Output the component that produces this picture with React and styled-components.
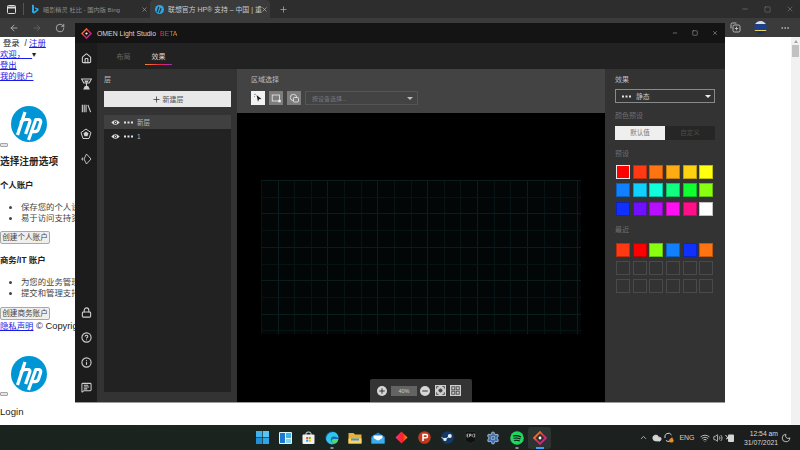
import styled, { createGlobalStyle } from "styled-components";
import {
  Home, Lock, CircleHelp, Info, MessageSquareText, Plus, ArrowLeft, ArrowRight, RotateCw,
  X, Minus, Square, Ellipsis, ChevronUp, Wifi, Volume2, Moon, Cloud, Settings
} from "lucide-react";

const CJK = `"Liberation Sans", "Noto Sans CJK SC", sans-serif`;

const Global = createGlobalStyle`
  html, body { margin: 0; padding: 0; width: 800px; height: 450px; overflow: hidden; background: #fff; }
  * { box-sizing: border-box; }
  body { font-family: ${CJK}; }
`;

const Screen = styled.div`
  position: relative;
  width: 800px;
  height: 450px;
  display: flex;
  flex-direction: column;
  overflow: hidden;
`;

/* ---- browser chrome ---- */
const TabStrip = styled.div`
  height: 18px;
  background: #2d2d2d;
  display: flex;
  align-items: stretch;
  color: #c9c9c9;
`;
const StripIcon = styled.div`
  width: 24px;
  display: flex;
  align-items: center;
  justify-content: center;
  border-right: 1px solid #555;
  margin: 3px 0;
`;
const Tab = styled.div`
  width: ${(p) => p.$w}px;
  display: flex;
  align-items: center;
  gap: 4px;
  padding: 0 2px 0 5px;
  background: ${(p) => (p.$active ? "#3b3b3b" : "transparent")};
  border-radius: 4px 4px 0 0;
  white-space: nowrap;
  svg { flex-shrink: 0; }
`;
const TabTitle = styled.span`
  flex: 1;
  min-width: 0;
  font-size: ${(p) => (p.$active ? 6.9 : 6.2)}px;
  color: ${(p) => (p.$active ? "#c8c8c8" : "#8c8c8c")};
`;
const NewTab = styled.div`
  width: 26px;
  display: flex;
  align-items: center;
  justify-content: center;
  color: #aaa;
`;
const WinControls = styled.div`
  margin-left: auto;
  display: flex;
  align-items: center;
  gap: 15px;
  padding-right: 6px;
  color: #777;
`;
const AddressBar = styled.div`
  height: 19px;
  background: #3b3b3b;
  display: flex;
  align-items: center;
  justify-content: space-between;
  padding: 0 10px 0 9px;
  color: #bbb;
`;
const NavGroup = styled.div`
  display: flex;
  align-items: center;
  gap: 13px;
`;
const Avatar = styled.div`
  width: 13px;
  height: 13px;
  border-radius: 50%;
  background: linear-gradient(180deg, #cfe0f5 0 25%, #1f3f86 25% 70%, #e8d25a 70% 78%, #16306b 78%);
`;

/* ---- the page behind the app ---- */
const Body = styled.div`
  flex: 1;
  display: flex;
  background: #fff;
  min-height: 0;
`;
const Page = styled.div`
  flex: 1;
  font-size: 8.4px;
  color: #222;
  min-width: 0;
  overflow: hidden;
`;
const Link = styled.a`
  color: #1a1ae6;
  text-decoration: underline;
`;
const TopLine = styled.div`
  height: ${(p) => p.$h || 11}px;
  line-height: ${(p) => p.$h || 11}px;
  padding-left: ${(p) => p.$pad || 0}px;
  white-space: nowrap;
`;
const LogoWrap = styled.div`
  padding: ${(p) => p.$top}px 0 0 11px;
  height: ${(p) => p.$h}px;
`;
const MiniButton = styled.div`
  width: 8px;
  height: 4px;
  background: #e4e4e4;
  border: 1px solid #a5a5a5;
  border-radius: 1px;
`;
const PageTitle = styled.div`
  font-size: 9.7px;
  font-weight: 700;
  margin-top: 9px;
  height: 12px;
  line-height: 12px;
  white-space: nowrap;
`;
const SubTitle = styled.div`
  font-size: 8.4px;
  font-weight: 700;
  margin-top: ${(p) => p.$top}px;
  height: 11px;
  line-height: 11px;
  white-space: nowrap;
`;
const Bullets = styled.ul`
  margin: 11px 0 0;
  padding: 0 0 0 21px;
  list-style: disc;
  li {
    height: 10.5px;
    line-height: 10.5px;
    white-space: nowrap;
    color: #444;
  }
`;
const PageButton = styled.div`
  width: 50px;
  height: 13px;
  margin-top: ${(p) => p.$top || 8}px;
  font-size: 7.6px;
  line-height: 11px;
  text-align: center;
  background: #efefef;
  border: 1px solid #a8a8a8;
  border-radius: 2px;
  color: #444;
`;
const FooterLine = styled.div`
  font-size: 9.3px;
  line-height: 11px;
  height: 11px;
  margin-top: 1px;
  white-space: nowrap;
  a { font-size: 8.4px; }
`;
const LoginText = styled.div`
  font-size: 9.6px;
  margin-top: 10px;
`;
const ScrollTrack = styled.div`
  width: 9px;
  background: #f1f1f1;
  display: flex;
  flex-direction: column;
  align-items: center;
  padding-top: 3px;
  gap: 2px;
`;
const ScrollArrow = styled.div`
  width: 0;
  height: 0;
  border-left: 2px solid transparent;
  border-right: 2px solid transparent;
  border-bottom: 3px solid #a3a3a3;
`;
const ScrollThumb = styled.div`
  width: 7px;
  height: 12px;
  background: #c1c1c1;
`;

/* ---- taskbar ---- */
const Taskbar = styled.div`
  position: relative;
  height: 25px;
  background: linear-gradient(90deg, #1b231e, #1c2420 45%, #1b1d1d);
  display: flex;
  align-items: center;
`;
const TaskIcons = styled.div`
  display: flex;
  align-items: center;
  margin-left: 251px;
`;
const TaskSlot = styled.div`
  position: relative;
  width: 23.1px;
  height: 22px;
  display: flex;
  align-items: center;
  justify-content: center;
  border-radius: 3px;
  background: ${(p) => (p.$active ? "#2c3330" : "transparent")};
  &::after {
    content: "";
    display: ${(p) => (p.$dot ? "block" : "none")};
    position: absolute;
    left: 50%;
    bottom: 0;
    width: ${(p) => (p.$active ? 8 : 3)}px;
    height: 1.5px;
    transform: translateX(-50%);
    background: ${(p) => (p.$active ? "#3aa0ff" : "#8c8c8c")};
  }
`;
const Tray = styled.div`
  margin-left: auto;
  display: flex;
  align-items: center;
  color: #d5d5d5;
  padding-right: 9px;
`;
const TraySlot = styled.div`
  width: ${(p) => p.$w}px;
  display: flex;
  align-items: center;
  justify-content: center;
`;
const TrayText = styled.span`
  font-size: 7px;
  color: #cfcfcf;
`;
const Clock = styled.div`
  font-size: 6.8px;
  line-height: 9px;
  text-align: right;
  color: #d8d8d8;
  margin: 0 3px 0 6px;
  white-space: nowrap;
`;

/* ---- OMEN app window ---- */
const AppWindow = styled.div`
  position: absolute;
  left: 75px;
  top: 23px;
  width: 650px;
  height: 380px;
  display: flex;
  flex-direction: column;
  background: #222;
  border-bottom: 1px solid #9a9a9a;
  color: #bbb;
`;
const TitleBar = styled.div`
  height: 20px;
  background: #141414;
  display: flex;
  align-items: center;
  padding-left: 6px;
  gap: 4px;
  font-size: 6.9px;
  color: #dadada;
`;
const AppName = styled.span`
  margin-left: 1px;
`;
const Beta = styled.span`
  background: linear-gradient(90deg, #ff2a6a, #ff3a3a 50%, #ffa62a);
  -webkit-background-clip: text;
  background-clip: text;
  color: transparent;
`;
const AppControls = styled.div`
  margin-left: auto;
  display: flex;
  align-items: center;
  gap: 14px;
  padding-right: 7px;
  color: #b5b5b5;
`;
const AppBody = styled.div`
  flex: 1;
  display: flex;
  min-height: 0;
`;
const Rail = styled.div`
  width: 22px;
  background: #1c1c1c;
  display: flex;
  flex-direction: column;
  align-items: center;
  padding: 3px 0 2px;
  color: #cfcfcf;
`;
const RailIcon = styled.div`
  height: 25px;
  display: flex;
  align-items: center;
  justify-content: center;
  margin-top: ${(p) => (p.$push ? "auto" : 0)};
`;
const Main = styled.div`
  flex: 1;
  display: flex;
  flex-direction: column;
  min-width: 0;
`;
const ModeBar = styled.div`
  height: 26px;
  background: #222;
  display: flex;
  align-items: center;
  padding-left: 17px;
  gap: 16px;
  font-size: 7px;
`;
const ModeTab = styled.div`
  position: relative;
  width: 19px;
  text-align: center;
  color: ${(p) => (p.$active ? "#d4d4d4" : "#666")};
  &::after {
    content: "";
    display: ${(p) => (p.$active ? "block" : "none")};
    position: absolute;
    left: -4px;
    right: -4px;
    bottom: -4px;
    height: 1px;
    background: linear-gradient(90deg, #f08a24, #e8264a 55%, #a52cc4);
  }
`;
const Columns = styled.div`
  flex: 1;
  display: flex;
  min-height: 0;
`;
const LeftPanel = styled.div`
  width: 140px;
  background: #333;
  padding: 6px 6px 10px 7px;
  display: flex;
  flex-direction: column;
`;
const Label = styled.div`
  font-size: 7px;
  height: 10px;
  line-height: 10px;
  color: ${(p) => (p.$dim ? "#6f6f6f" : "#bdbdbd")};
`;
const NewLayer = styled.div`
  height: 16px;
  margin-top: 6px;
  background: #e8e8e8;
  display: flex;
  align-items: center;
  justify-content: center;
  gap: 2px;
  font-size: 7px;
  color: #555;
`;
const LayerList = styled.div`
  flex: 1;
  margin-top: 8px;
  background: #222;
  display: flex;
  flex-direction: column;
`;
const LayerRow = styled.div`
  height: 14px;
  padding-left: 7px;
  display: flex;
  align-items: center;
  gap: 4px;
  font-size: 6.5px;
  color: #b8b8b8;
  background: ${(p) => (p.$selected ? "#404040" : "transparent")};
`;
const Center = styled.div`
  flex: 1;
  display: flex;
  flex-direction: column;
  min-width: 0;
`;
const ToolPanel = styled.div`
  height: 44px;
  background: #434343;
  padding: 6px 14px;
`;
const ToolRow = styled.div`
  display: flex;
  align-items: center;
  gap: 4px;
  margin-top: 6px;
`;
const ToolButton = styled.div`
  width: 14px;
  height: 14px;
  display: flex;
  align-items: center;
  justify-content: center;
  background: ${(p) => (p.$active ? "#f2f2f2" : "#7d7d7d")};
  color: ${(p) => (p.$active ? "#222" : "#e6e6e6")};
`;
const DeviceSelect = styled.div`
  width: 113px;
  height: 14px;
  border: 1px solid #555;
  display: flex;
  align-items: center;
  justify-content: space-between;
  padding: 0 4px 0 6px;
  font-size: 6px;
  color: #777;
`;
const Caret = styled.div`
  width: 0;
  height: 0;
  border-left: 3px solid transparent;
  border-right: 3px solid transparent;
  border-top: 3px solid ${(p) => p.$c || "#bbb"};
`;
const Canvas = styled.div`
  position: relative;
  flex: 1;
  background: #000;
  display: flex;
  flex-direction: column;
  align-items: center;
  justify-content: flex-end;
  min-height: 0;
`;
const GridArt = styled.svg`
  position: absolute;
  left: 24px;
  top: 67px;
`;
const ZoomBar = styled.div`
  position: relative;
  width: 102px;
  height: 23px;
  background: #343434;
  border-radius: 2px 2px 0 0;
  display: flex;
  align-items: center;
  padding-left: 7px;
  color: #ddd;
`;
const RoundBtn = styled.div`
  width: 10px;
  height: 10px;
  border-radius: 50%;
  background: #d6d6d6;
  color: #333;
  display: flex;
  align-items: center;
  justify-content: center;
  margin-right: ${(p) => p.$mr || 0}px;
`;
const ZoomValue = styled.div`
  width: 26px;
  height: 10px;
  margin: 0 3px 0 4px;
  background: #636363;
  font-size: 5.5px;
  line-height: 10px;
  text-align: center;
  color: #ccc;
`;
const SquareBtn = styled.div`
  width: 11px;
  height: 11px;
  margin-right: 4px;
  background: #cfcfcf;
  display: flex;
  align-items: center;
  justify-content: center;
`;
const RightPanel = styled.div`
  width: 120px;
  background: #333;
  padding: 6px 10px;
  display: flex;
  flex-direction: column;
`;
const EffectSelect = styled.div`
  height: 14px;
  margin-top: 4px;
  border: 1px solid #8a8a8a;
  display: flex;
  align-items: center;
  padding: 0 3px 0 6px;
  gap: 5px;
  font-size: 6.8px;
  color: #c8c8c8;
  ${Caret} { margin-left: auto; }
`;
const Toggle = styled.div`
  display: flex;
  height: 14px;
  margin-top: 5px;
`;
const ToggleOption = styled.div`
  flex: 1;
  text-align: center;
  font-size: 6.5px;
  line-height: 14px;
  background: ${(p) => (p.$on ? "#efefef" : "#262626")};
  color: ${(p) => (p.$on ? "#777" : "#4d4d4d")};
`;
const SectionLabel = styled(Label)`
  margin-top: ${(p) => p.$top}px;
`;
const Swatches = styled.div`
  display: grid;
  grid-template-columns: repeat(6, 14px);
  grid-auto-rows: 14px;
  column-gap: 2.7px;
  row-gap: 4.3px;
  margin-top: ${(p) => p.$top}px;
  margin-left: 1px;
`;
const Swatch = styled.div`
  background: ${(p) => p.$c || "transparent"};
  border: 1px solid ${(p) => (p.$selected ? "#e8e8e8" : p.$c ? "rgba(0,0,0,.25)" : "#4a4a4a")};
`;

const presets = [
  "#ff0000", "#ff3a12", "#ff7410", "#ffac12", "#ffd20f", "#ffff10",
  "#1080ff", "#10d0ff", "#10ffdc", "#10ff80", "#10ff30", "#88ff10",
  "#1030ff", "#7010ff", "#b810ff", "#ff10f0", "#ff1088", "#ffffff"
];
const recent = ["#ff3a12", "#ff0000", "#88ff10", "#1080ff", "#1030ff", "#ff7410"];

function HpLogo() {
  return (
    <svg width="36" height="36" viewBox="0 0 36 36">
      <circle cx="18" cy="18" r="18" fill="#0096d6" />
      <g stroke="#fff" strokeWidth="3.2" fill="none">
        <path d="M14 6 L6.5 29" />
        <path d="M9.8 17 Q11 13.5 15 13.5 H17 Q19.5 13.5 18.8 16 L14.6 28" />
        <path d="M25 13 L17.5 34" />
        <path d="M24 13.5 H27 Q30.5 13.5 29.6 16.5 L27.5 23 Q26.7 25.6 24 25.6 H20.5" />
      </g>
    </svg>
  );
}

function OmenMark({ size = 11 }) {
  return (
    <svg width={size} height={size} viewBox="0 0 12 12">
      <defs>
        <linearGradient id="om" x1="0" y1="0" x2="1" y2="1">
          <stop offset="0" stopColor="#f5a623" />
          <stop offset="0.5" stopColor="#e8264a" />
          <stop offset="1" stopColor="#b02cc4" />
        </linearGradient>
      </defs>
      <path d="M6 1 L11 6 L6 11 L1 6 Z" fill="none" stroke="url(#om)" strokeWidth="1.6" />
      <circle cx="6" cy="6" r="1.2" fill="#fff" />
    </svg>
  );
}

function EyeIcon() {
  return (
    <svg width="9" height="7" viewBox="0 0 9 7">
      <path d="M0.3 3.5 Q4.5 -1.2 8.7 3.5 Q4.5 8.2 0.3 3.5Z" fill="#e2e2e2" />
      <circle cx="4.5" cy="3.5" r="1.5" fill="#2a2a2a" />
      <circle cx="4.5" cy="3.5" r="0.7" fill="#e2e2e2" />
    </svg>
  );
}

function Dots() {
  return (
    <svg width="9" height="3" viewBox="0 0 9 3" fill="#e2e2e2">
      <rect x="0" y="0.5" width="2" height="2" />
      <rect x="3.5" y="0.5" width="2" height="2" />
      <rect x="7" y="0.5" width="2" height="2" />
    </svg>
  );
}

function CupIcon() {
  return (
    <svg width="11" height="12" viewBox="0 0 11 12" fill="none" stroke="currentColor" strokeWidth="1.1">
      <path d="M0.6 1 H10.4 L8.2 5 H2.8 Z" />
      <path d="M3.2 2.6 H7.8 L6.6 4.6 H4.4 Z" fill="currentColor" stroke="none" />
      <path d="M5.5 5 V8.5" />
      <path d="M3 11 L4.2 8.6 H6.8 L8 11 Z" fill="currentColor" />
    </svg>
  );
}

function LibraryIcon() {
  return (
    <svg width="11" height="11" viewBox="0 0 12 12" fill="none" stroke="currentColor" strokeWidth="1.2">
      <path d="M1.5 2v8M3.5 2v8M5.5 2v8M7.5 2l3 8" />
    </svg>
  );
}

function BadgeIcon() {
  return (
    <svg width="12" height="12" viewBox="0 0 12 12" fill="none" stroke="currentColor" strokeWidth="1">
      <path d="M6 1 L11 4.6 L9 10.5 H3 L1 4.6 Z" />
      <path d="M6 3.5 L8.5 5.3 L7.5 8.3 H4.5 L3.5 5.3 Z" fill="currentColor" stroke="none" />
    </svg>
  );
}

function DiamondIcon() {
  return (
    <svg width="12" height="12" viewBox="0 0 12 12" fill="none" stroke="currentColor" strokeWidth="0.9">
      <path d="M6.5 1 L11 6 L6.5 11 L4 6 Z" />
      <path d="M1 6h.8M2.6 4.5v3" />
    </svg>
  );
}

function BingIcon() {
  return (
    <svg width="8" height="11" viewBox="0 0 8 11">
      <path d="M1 0.5 L3 1.2 V7.5 L6 5.8 L4.4 5 L3.6 3.2 L7.5 4.6 V6.6 L3 9.8 L1 8.6 Z" fill="#2aa7e8" />
    </svg>
  );
}

function SmallHp() {
  return (
    <svg width="9" height="9" viewBox="0 0 36 36">
      <circle cx="18" cy="18" r="18" fill="#2aa7e8" />
      <path d="M15 7 L8 29 M24 13 L17 32" stroke="#333" strokeWidth="5" />
    </svg>
  );
}

function CursorIcon() {
  return (
    <svg width="10" height="10" viewBox="0 0 10 10">
      <path d="M3.5 2 L8.5 6 L6 6.3 L5 8.8 Z" fill="#222" />
      <path d="M1 1.5h1M1 3.5h1M2.5 0.8v1" stroke="#777" strokeWidth="0.7" />
    </svg>
  );
}

function RegionIcon() {
  return (
    <svg width="10" height="10" viewBox="0 0 10 10" fill="none" stroke="#eee" strokeWidth="0.8">
      <rect x="1.2" y="2" width="7.2" height="6" />
      <rect x="7.7" y="7.3" width="1.6" height="1.6" fill="#eee" />
    </svg>
  );
}

function DevicesIcon() {
  return (
    <svg width="11" height="11" viewBox="0 0 11 11" fill="none" stroke="#eee" strokeWidth="0.8">
      <circle cx="4.5" cy="4.5" r="3.2" />
      <rect x="4.5" y="4.5" width="5" height="4.5" rx="0.8" fill="#7d7d7d" />
    </svg>
  );
}

function FitIcon({ grid }) {
  return (
    <svg width="9" height="9" viewBox="0 0 9 9" fill="none" stroke="#444" strokeWidth="0.9">
      {grid ? (
        <>
          <rect x="0.8" y="0.8" width="3" height="3" />
          <rect x="5.2" y="0.8" width="3" height="3" />
          <rect x="0.8" y="5.2" width="3" height="3" />
          <rect x="5.2" y="5.2" width="3" height="3" />
        </>
      ) : (
        <>
          <path d="M0.6 2.6V0.6H2.6M6.4 0.6H8.4V2.6M8.4 6.4V8.4H6.4M2.6 8.4H0.6V6.4" />
          <circle cx="4.5" cy="4.5" r="1.6" fill="#444" />
        </>
      )}
    </svg>
  );
}

// faint layout grid shown on the empty canvas
function DeviceGrid() {
  const w = 320;
  const h = 154;
  const major = [];
  for (let x = 0; x <= w; x += 16.62) major.push(Math.round(x));
  const rows = [];
  for (let y = 0; y <= h; y += 16.7) rows.push(Math.round(y));
  return (
    <GridArt width={w} height={h} viewBox={`0 0 ${w} ${h}`}>
      <rect width={w} height={h} fill="#020606" />
      {major.map((x, i) => (
        <line key={x} x1={x + 0.5} x2={x + 0.5} y1="0" y2={h} stroke={i % 3 === 1 ? "#0a1e20" : "#071314"} />
      ))}
      {rows.map((y, i) => (
        <line key={y} y1={y + 0.5} y2={y + 0.5} x1="0" x2={w} stroke={i % 2 === 0 ? "#0a1c1c" : "#071212"} />
      ))}
    </GridArt>
  );
}

function StartIcon() {
  return (
    <svg width="13" height="13" viewBox="0 0 13 13">
      <rect width="6.2" height="6.2" fill="#3fb2ee" />
      <rect x="6.8" width="6.2" height="6.2" fill="#58c6f5" />
      <rect y="6.8" width="6.2" height="6.2" fill="#1f8fd8" />
      <rect x="6.8" y="6.8" width="6.2" height="6.2" fill="#2fa6e6" />
    </svg>
  );
}
function WidgetsIcon() {
  return (
    <svg width="13" height="12" viewBox="0 0 13 12">
      <rect width="13" height="12" rx="1" fill="#dff3fb" />
      <rect x="1" y="1" width="5" height="10" fill="#1a78d0" />
      <rect x="7" y="1" width="5" height="5" fill="#36b7e8" />
      <rect x="7" y="7" width="5" height="4" fill="#7ed6ee" />
    </svg>
  );
}
function StoreIcon() {
  return (
    <svg width="13" height="13" viewBox="0 0 13 13">
      <path d="M4 4 V2.5 Q4 1 6.5 1 Q9 1 9 2.5 V4" fill="none" stroke="#e4e4e4" />
      <rect x="0.5" y="3.5" width="12" height="9.5" rx="1" fill="#f0f0f0" />
      <rect x="4.2" y="6" width="2" height="2" fill="#f25022" />
      <rect x="6.8" y="6" width="2" height="2" fill="#7fba00" />
      <rect x="4.2" y="8.6" width="2" height="2" fill="#00a4ef" />
      <rect x="6.8" y="8.6" width="2" height="2" fill="#ffb900" />
    </svg>
  );
}
function EdgeIcon() {
  return (
    <svg width="14" height="14" viewBox="0 0 14 14">
      <circle cx="7" cy="7" r="6.5" fill="#0c6fc4" />
      <path d="M1 8 Q2 1.5 8 1 Q13 1.5 13.5 7 Q11 5 8 5.5 Q5 6.5 6 10 Q7 12.5 10.5 12.5 Q3 15 1 8Z" fill="#33c6e6" />
      <path d="M8 8 H13.5 Q13 11 10.5 12.5 Q7 12.5 6.5 9.5Z" fill="#54d86a" />
    </svg>
  );
}
function FolderIcon() {
  return (
    <svg width="14" height="12" viewBox="0 0 14 12">
      <path d="M0.5 1 H5.5 L7 2.5 H13.5 V11.5 H0.5Z" fill="#e6b23c" />
      <rect x="0.5" y="6.5" width="13" height="5" fill="#ffd45e" />
      <rect x="3" y="6.5" width="8" height="2" fill="#3a9adf" />
    </svg>
  );
}
function MailIcon() {
  return (
    <svg width="14" height="12" viewBox="0 0 14 12">
      <path d="M0.5 4.5 L7 0.5 L13.5 4.5 V11.5 H0.5Z" fill="#1d86d8" />
      <path d="M2.5 3.5 H11.5 V6.5 L7 9 L2.5 6.5Z" fill="#ffffff" />
      <path d="M0.5 5 L7 8.8 L13.5 5 V11.5 H0.5Z" fill="#38aef0" />
    </svg>
  );
}
function RedDiamond() {
  return (
    <svg width="13" height="13" viewBox="0 0 13 13">
      <defs>
        <linearGradient id="rd" x1="0" x2="1" y1="0" y2="0">
          <stop offset="0" stopColor="#ff2f7e" />
          <stop offset="0.6" stopColor="#ff2020" />
          <stop offset="1" stopColor="#ff9a1a" />
        </linearGradient>
      </defs>
      <path d="M6.5 0.5 L12.5 6.5 L6.5 12.5 L0.5 6.5Z" fill="url(#rd)" />
    </svg>
  );
}
function PhotonIcon() {
  return (
    <svg width="13" height="13" viewBox="0 0 13 13">
      <circle cx="6.5" cy="6.5" r="6.3" fill="#c4371f" />
      <path d="M5 10 V3.5 H8 Q9.5 3.5 9.5 5 Q9.5 6.8 8 6.8 H5" fill="none" stroke="#fff" strokeWidth="1.5" />
    </svg>
  );
}
function SteamIcon() {
  return (
    <svg width="13" height="13" viewBox="0 0 13 13">
      <circle cx="6.5" cy="6.5" r="6.3" fill="#123a66" />
      <circle cx="8.8" cy="5" r="2" fill="#e8eef4" />
      <circle cx="4" cy="8.4" r="1.6" fill="#e8eef4" />
      <path d="M0.5 6.5 L4 8.4 L8.8 5" stroke="#e8eef4" strokeWidth="0.9" fill="none" />
    </svg>
  );
}
function EpicIcon() {
  return (
    <svg width="11" height="13" viewBox="0 0 11 13">
      <path d="M0.5 0.5 H10.5 V10 L5.5 12.5 L0.5 10Z" fill="#111" stroke="#333" strokeWidth="0.5" />
      <path d="M2 3 H3.5 M2 3 V6 H3.5 M2 4.5 H3 M4.5 6 V3 H6 V4.6 H4.5 M7.2 3 V6 M8.2 3 H9.6 V6 H8.2" stroke="#eee" strokeWidth="0.6" fill="none" />
    </svg>
  );
}
function SpotifyIcon() {
  return (
    <svg width="14" height="14" viewBox="0 0 14 14">
      <circle cx="7" cy="7" r="6.8" fill="#1ed760" />
      <path d="M3 5 Q7 4 11 6 M3.6 7.3 Q7 6.4 10.4 8 M4.2 9.5 Q7 8.8 9.8 10" stroke="#111" strokeWidth="1.1" fill="none" />
    </svg>
  );
}
function SyncIcon() {
  return (
    <svg width="11" height="11" viewBox="0 0 11 11" fill="none">
      <path d="M2 6 A3.6 3.6 0 0 1 8.5 3 M9 5.5 A3.6 3.6 0 0 1 3 8.5" stroke="#d5d5d5" />
      <circle cx="8.4" cy="8.4" r="2.2" fill="#f28c1c" />
    </svg>
  );
}
function BatteryPlug() {
  return (
    <svg width="11" height="10" viewBox="0 0 11 10">
      <rect x="3" y="1.5" width="6" height="7.5" rx="1" fill="#d5d5d5" />
      <path d="M0.5 2 L3 5 L1 6" stroke="#d5d5d5" fill="none" />
    </svg>
  );
}
function CollectionsIcon() {
  return (
    <svg width="11" height="11" viewBox="0 0 11 11" fill="none" stroke="#c4c4c4" strokeWidth="0.9">
      <path d="M1 6.5 V2.5 Q1 1 2.5 1 H6.5" />
      <rect x="3" y="3" width="7" height="7" rx="1.5" />
      <path d="M6.5 4.8v3.4M4.8 6.5h3.4" />
    </svg>
  );
}

function PageContent() {
  return (
    <Page>
      <TopLine $h={12} $pad={3}>
        登录 &nbsp;/&nbsp;<Link>注册</Link>
      </TopLine>
      <TopLine>
        <Link>欢迎，&nbsp; &nbsp;</Link>▾
      </TopLine>
      <TopLine><Link>登出</Link></TopLine>
      <TopLine><Link>我的账户</Link></TopLine>
      <LogoWrap $top={24} $h={61}><HpLogo /></LogoWrap>
      <MiniButton />
      <PageTitle>选择注册选项</PageTitle>
      <SubTitle $top={12}>个人账户</SubTitle>
      <Bullets>
        <li>保存您的个人设备</li>
        <li>易于访问支持资源</li>
      </Bullets>
      <PageButton $top={8}>创建个人账户</PageButton>
      <SubTitle $top={11}>商务/IT 账户</SubTitle>
      <Bullets>
        <li>为您的业务管理设备</li>
        <li>提交和管理支持案例</li>
      </Bullets>
      <PageButton $top={9}>创建商务账户</PageButton>
      <FooterLine><Link>隐私声明</Link> © Copyright</FooterLine>
      <LogoWrap $top={24} $h={60}><HpLogo /></LogoWrap>
      <MiniButton />
      <LoginText>Login</LoginText>
    </Page>
  );
}

export default function App() {
  return (
    <>
      <Global />
      <Screen>
        <TabStrip>
          <StripIcon>
            <svg width="9" height="9" viewBox="0 0 9 9" fill="none" stroke="#ddd">
              <rect x="0.5" y="0.5" width="8" height="8" rx="1" />
              <path d="M0.5 2.5h8" strokeWidth="2" />
            </svg>
          </StripIcon>
          <Tab $w={126}>
            <span style={{ marginLeft: 2, display: "flex" }}><BingIcon /></span>
            <TabTitle>暗影精灵 杜比 - 国内版 Bing</TabTitle>
            <X size={7} color="#aaa" />
          </Tab>
          <Tab $active $w={120}>
            <SmallHp />
            <TabTitle $active>联想官方 HP® 支持 – 中国 | 重</TabTitle>
            <X size={7} color="#ccc" />
          </Tab>
          <NewTab><Plus size={9} /></NewTab>
          <WinControls>
            <Minus size={8} />
            <Square size={7} />
            <X size={8} />
          </WinControls>
        </TabStrip>
        <AddressBar>
          <NavGroup>
            <ArrowLeft size={10} />
            <ArrowRight size={10} color="#666" />
            <RotateCw size={10} />
          </NavGroup>
          <NavGroup>
            <CollectionsIcon />
            <Avatar />
            <Ellipsis size={10} />
          </NavGroup>
        </AddressBar>
        <Body>
          <PageContent />
          <ScrollTrack>
            <ScrollArrow />
            <ScrollThumb />
          </ScrollTrack>
        </Body>
        <Taskbar>
          <TaskIcons>
            <TaskSlot><StartIcon /></TaskSlot>
            <TaskSlot><WidgetsIcon /></TaskSlot>
            <TaskSlot><StoreIcon /></TaskSlot>
            <TaskSlot $dot><EdgeIcon /></TaskSlot>
            <TaskSlot><FolderIcon /></TaskSlot>
            <TaskSlot><MailIcon /></TaskSlot>
            <TaskSlot><RedDiamond /></TaskSlot>
            <TaskSlot><PhotonIcon /></TaskSlot>
            <TaskSlot><SteamIcon /></TaskSlot>
            <TaskSlot><EpicIcon /></TaskSlot>
            <TaskSlot><Settings size={14} color="#8fa6bd" fill="#3d6db0" /></TaskSlot>
            <TaskSlot $dot><SpotifyIcon /></TaskSlot>
            <TaskSlot $dot $active><OmenMark size={14} /></TaskSlot>
          </TaskIcons>
          <Tray>
            <TraySlot $w={13}><ChevronUp size={9} /></TraySlot>
            <TraySlot $w={12.5}><Cloud size={10} fill="#d5d5d5" /></TraySlot>
            <TraySlot $w={12}><SyncIcon /></TraySlot>
            <TraySlot $w={24}><TrayText>ENG</TrayText></TraySlot>
            <TraySlot $w={12.5}><Wifi size={10} /></TraySlot>
            <TraySlot $w={12.5}><Volume2 size={10} /></TraySlot>
            <TraySlot $w={14}><BatteryPlug /></TraySlot>
            <Clock>12:54 am<br />31/07/2021</Clock>
            <Moon size={10} />
          </Tray>
        </Taskbar>

        <AppWindow>
          <TitleBar>
            <OmenMark />
            <AppName>OMEN Light Studio</AppName>
            <Beta>BETA</Beta>
            <AppControls>
              <Minus size={6} />
              <Square size={6} />
              <X size={6} />
            </AppControls>
          </TitleBar>
          <AppBody>
            <Rail>
              <RailIcon><Home size={11} strokeWidth={2.4} /></RailIcon>
              <RailIcon><CupIcon /></RailIcon>
              <RailIcon><LibraryIcon /></RailIcon>
              <RailIcon><BadgeIcon /></RailIcon>
              <RailIcon><DiamondIcon /></RailIcon>
              <RailIcon $push><Lock size={11} strokeWidth={2.4} /></RailIcon>
              <RailIcon><CircleHelp size={11} strokeWidth={2.4} /></RailIcon>
              <RailIcon><Info size={11} strokeWidth={2.4} /></RailIcon>
              <RailIcon><MessageSquareText size={11} strokeWidth={2.2} /></RailIcon>
            </Rail>
            <Main>
              <ModeBar>
                <ModeTab>布局</ModeTab>
                <ModeTab $active>效果</ModeTab>
              </ModeBar>
              <Columns>
                <LeftPanel>
                  <Label>层</Label>
                  <NewLayer><Plus size={9} color="#333" />新建层</NewLayer>
                  <LayerList>
                    <LayerRow $selected>
                      <EyeIcon />
                      <Dots />
                      <span>新层</span>
                    </LayerRow>
                    <LayerRow>
                      <EyeIcon />
                      <Dots />
                      <span>1</span>
                    </LayerRow>
                  </LayerList>
                </LeftPanel>
                <Center>
                  <ToolPanel>
                    <Label>区域选择</Label>
                    <ToolRow>
                      <ToolButton $active><CursorIcon /></ToolButton>
                      <ToolButton><RegionIcon /></ToolButton>
                      <ToolButton><DevicesIcon /></ToolButton>
                      <DeviceSelect>
                        <span>按设备选择...</span>
                        <Caret />
                      </DeviceSelect>
                    </ToolRow>
                  </ToolPanel>
                  <Canvas>
                    <DeviceGrid />
                    <ZoomBar>
                      <RoundBtn><Plus size={8} strokeWidth={3} /></RoundBtn>
                      <ZoomValue>40%</ZoomValue>
                      <RoundBtn $mr={5}><Minus size={8} strokeWidth={3} /></RoundBtn>
                      <SquareBtn><FitIcon /></SquareBtn>
                      <SquareBtn><FitIcon grid /></SquareBtn>
                    </ZoomBar>
                  </Canvas>
                </Center>
                <RightPanel>
                  <Label>效果</Label>
                  <EffectSelect>
                    <Dots />
                    <span>静态</span>
                    <Caret $c="#eee" />
                  </EffectSelect>
                  <SectionLabel $dim $top={8}>颜色预设</SectionLabel>
                  <Toggle>
                    <ToggleOption $on>默认值</ToggleOption>
                    <ToggleOption>自定义</ToggleOption>
                  </Toggle>
                  <SectionLabel $dim $top={9}>预设</SectionLabel>
                  <Swatches $top={6}>
                    {presets.map((c, i) => <Swatch key={i} $c={c} $selected={i === 0} />)}
                  </Swatches>
                  <SectionLabel $dim $top={9}>最近</SectionLabel>
                  <Swatches $top={8}>
                    {recent.map((c, i) => <Swatch key={i} $c={c} />)}
                    {Array.from({ length: 12 }).map((_, i) => <Swatch key={i + 20} />)}
                  </Swatches>
                </RightPanel>
              </Columns>
            </Main>
          </AppBody>
        </AppWindow>
      </Screen>
    </>
  );
}
